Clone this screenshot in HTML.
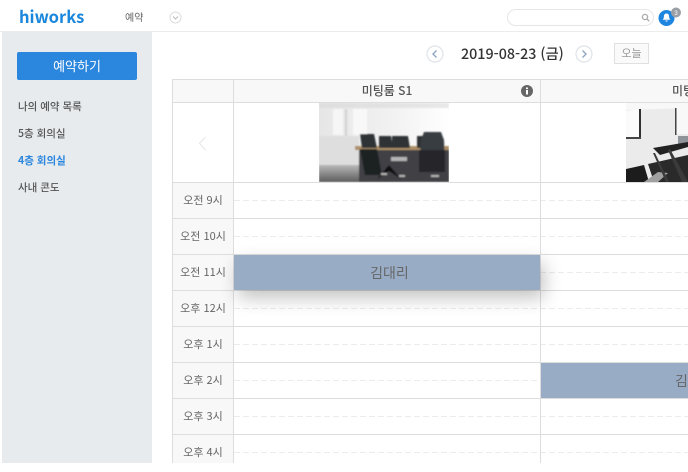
<!DOCTYPE html>
<html lang="ko"><head><meta charset="utf-8"><title>hiworks 예약</title>
<style>
html,body{margin:0;padding:0;background:#fff}
#p{position:relative;width:688px;height:472px;overflow:hidden;background:#fff;font-family:"Noto Sans CJK KR","Liberation Sans",sans-serif;color:#555}
#p div,#p svg{position:absolute}
.h{height:1px;background:#ddd}
.v{width:1px;background:#ddd}
.d{height:1px;background:repeating-linear-gradient(90deg,#ececec 0 6px,transparent 6px 9px)}
.t{left:173px;width:60px;text-align:center;font-size:11px;line-height:35px;height:35px;background:#f8f8f8;color:#666}
.m{left:18px;font-size:10.500px;line-height:14px;font-weight:500;color:#555;white-space:nowrap}
</style></head><body>
<div id="p">
<!-- top bar -->
<div style="left:0;top:31px;width:688px;height:1px;background:#ececec"></div>
<div style="left:19px;top:4px;font-size:16.500px;line-height:24px;font-weight:700;color:#1a86dc">hiworks</div>
<div style="left:125px;top:10px;font-size:10px;line-height:14px;color:#666">예약</div>
<svg style="left:169px;top:11px" width="13" height="13" viewBox="0 0 13 13"><circle cx="6.500" cy="6.500" r="5.500" fill="#fff" stroke="#ddd"/><path d="M4 5.500l2.500 2.500 2.500-2.500" fill="none" stroke="#bbb"/></svg>
<div style="left:507px;top:9px;width:145px;height:15px;border:1px solid #e6e6e6;border-radius:9px;background:#fff"></div>
<svg style="left:641px;top:13px" width="9" height="9" viewBox="0 0 9 9"><circle cx="4" cy="4" r="2.600" fill="none" stroke="#aaa" stroke-width="1.300"/><path d="M6 6l2.200 2.200" stroke="#aaa" stroke-width="1.300"/></svg>
<svg style="left:658px;top:7px" width="24" height="20" viewBox="0 0 24 20"><circle cx="8.500" cy="11" r="8" fill="#1f86e0"/><path d="M8.500 6.500c-2 0-2.600 1.600-2.600 3.200 0 1.600-.9 2.400-1.100 3h7.400c-.2-.6-1.100-1.400-1.100-3 0-1.600-.6-3.200-2.600-3.200zM7.500 13.500h2v1h-2z" fill="#fff"/><circle cx="18" cy="5.500" r="5" fill="#9a9fa6"/><text x="18" y="7.800" font-size="6" fill="#fff" text-anchor="middle" font-family="Liberation Sans">3</text></svg>
<!-- sidebar -->
<div style="left:2px;top:32px;width:150px;height:431px;background:#e7ebee"></div>
<div style="left:17px;top:52px;width:120px;height:28px;background:#2b86dd;border-radius:2px;color:#fff;font-size:13px;line-height:27px;text-align:center">예약하기</div>
<div class="m" style="top:100px">나의 예약 목록</div>
<div class="m" style="top:127px">5층 회의실</div>
<div class="m" style="top:154px;color:#2b86dd;font-weight:700">4층 회의실</div>
<div class="m" style="top:181px">사내 콘도</div>
<!-- date nav -->
<svg style="left:426px;top:45px" width="18" height="18" viewBox="0 0 18 18"><circle cx="9" cy="9" r="8" fill="#fff" stroke="#dfe3e8" stroke-width="1.200"/><path d="M10.500 5.500L7 9l3.500 3.500" fill="none" stroke="#8fa6c4" stroke-width="1.400"/></svg>
<div style="left:461px;top:43px;font-size:14.300px;line-height:21px;font-weight:500;color:#333;white-space:nowrap">2019-08-23 (금)</div>
<svg style="left:575px;top:45px" width="18" height="18" viewBox="0 0 18 18"><circle cx="9" cy="9" r="8" fill="#fff" stroke="#dfe3e8" stroke-width="1.200"/><path d="M7.500 5.500L11 9l-3.500 3.500" fill="none" stroke="#8fa6c4" stroke-width="1.400"/></svg>
<div style="left:614px;top:43px;width:33px;height:19px;border:1px solid #e0e0e0;background:#fafafa;color:#999;font-size:11px;line-height:19px;text-align:center">오늘</div>
<!-- table bg -->
<div style="left:173px;top:80px;width:515px;height:22px;background:#f8f8f8"></div>
<div class="t" style="top:183px">오전 9시</div>
<div class="t" style="top:219px">오전 10시</div>
<div class="t" style="top:255px">오전 11시</div>
<div class="t" style="top:291px">오후 12시</div>
<div class="t" style="top:327px">오후 1시</div>
<div class="t" style="top:363px">오후 2시</div>
<div class="t" style="top:399px">오후 3시</div>
<div class="t" style="top:435px;height:28px">오후 4시</div>
<!-- dashed -->
<div class="d" style="left:234px;top:200px;width:454px"></div>
<div class="d" style="left:234px;top:236px;width:454px"></div>
<div class="d" style="left:234px;top:272px;width:454px"></div>
<div class="d" style="left:234px;top:308px;width:454px"></div>
<div class="d" style="left:234px;top:344px;width:454px"></div>
<div class="d" style="left:234px;top:380px;width:454px"></div>
<div class="d" style="left:234px;top:416px;width:454px"></div>
<div class="d" style="left:234px;top:452px;width:454px"></div>
<!-- grid -->
<div class="h" style="left:172px;top:79px;width:516px"></div>
<div class="h" style="left:172px;top:102px;width:516px"></div>
<div class="h" style="left:172px;top:182px;width:516px"></div>
<div class="h" style="left:172px;top:218px;width:516px"></div>
<div class="h" style="left:172px;top:254px;width:516px"></div>
<div class="h" style="left:172px;top:290px;width:516px"></div>
<div class="h" style="left:172px;top:326px;width:516px"></div>
<div class="h" style="left:172px;top:362px;width:516px"></div>
<div class="h" style="left:172px;top:398px;width:516px"></div>
<div class="h" style="left:172px;top:434px;width:516px"></div>
<div class="v" style="left:172px;top:79px;height:384px"></div>
<div class="v" style="left:233px;top:79px;height:384px"></div>
<div class="v" style="left:540px;top:79px;height:384px"></div>
<!-- header -->
<div style="left:234px;top:83px;width:306px;text-align:center;font-size:12px;line-height:16px;font-weight:500;color:#555">미팅룸 S1</div>
<div style="left:672px;top:83px;font-size:12px;line-height:16px;font-weight:500;color:#555;white-space:nowrap">미팅룸 S2</div>
<svg style="left:521px;top:85px" width="12" height="12" viewBox="0 0 12 12"><circle cx="6" cy="6" r="6" fill="#666"/><rect x="5" y="5" width="2" height="4.500" fill="#fff"/><rect x="5" y="2.500" width="2" height="1.600" fill="#fff"/></svg>
<svg style="left:198px;top:136px" width="9" height="15" viewBox="0 0 9 15"><path d="M7.500 1L1.500 7.500l6 6.500" fill="none" stroke="#e6e6e6"/></svg>
<!-- image 1 -->
<svg style="left:319px;top:103px" width="130" height="79" viewBox="0 0 130 79">
<defs><linearGradient id="g" x1="0" x2="1" y1="0" y2="0"><stop offset="0" stop-color="#e6e6e6"/><stop offset=".55" stop-color="#f1f1f1"/><stop offset="1" stop-color="#fff"/></linearGradient><linearGradient id="f" x1="0" x2="0" y1="0" y2="1"><stop offset="0" stop-color="#b8b8b8"/><stop offset="1" stop-color="#5c5c5c"/></linearGradient><filter id="b"><feGaussianBlur stdDeviation=".8"/></filter></defs>
<rect width="130" height="79" fill="url(#g)"/>
<g filter="url(#b)">
<rect x="0" y="0" width="130" height="5" fill="#d8d8d8" opacity=".6"/>
<rect x="14" y="6" width="10" height="26" fill="#f6f6f6"/><rect x="26" y="6" width="2" height="30" fill="#d2d2d2"/><rect x="34" y="6" width="14" height="26" fill="#f8f8f8"/>
<rect x="0" y="33" width="40" height="29" fill="#dedede"/>
<rect x="0" y="62" width="48" height="17" fill="url(#f)"/>
<rect x="40" y="47" width="90" height="32" fill="#3f4144"/>
<rect x="36" y="43" width="94" height="4" fill="#ad9068"/>
<path d="M41 31h14l3 14H43zM60 33h12l2 12H60zM73 33h16l2 12H73zM98 33h6v12h-6z" fill="#2e3135"/>
<path d="M41 46h17l5 26H46z" fill="#1f2124"/>
<path d="M105 29h17l3 8 1 27H100l2-27z" fill="#383d43"/>
<path d="M100 47h26v22H100z" fill="#25282c"/>
<path d="M58 76l12-14 12 14-12-8z" fill="#111"/>
<path d="M62 70h6v2h-6zM80 72h6v2h-6zM112 72h8v2h-8zM72 54h16v4H72z" fill="#b4b4b4"/>
</g></svg>
<!-- image 2 -->
<svg style="left:626px;top:103px" width="62" height="79" viewBox="0 0 62 79">
<defs><filter id="c"><feGaussianBlur stdDeviation=".35"/></filter></defs>
<rect width="62" height="79" fill="#ebebeb"/>
<g filter="url(#c)">
<path d="M0 0h62v5L0 7z" fill="#f8f8f8"/><path d="M0 8l13-2v29H0z" fill="#fbfbfb"/><rect x="13" y="6" width="2" height="30" fill="#333"/><rect x="0" y="34" width="15" height="2" fill="#444"/>
<rect x="50" y="5" width="12" height="26" fill="#f8f8f8"/><rect x="49" y="5" width="1.500" height="27" fill="#444"/>
<rect x="52" y="33" width="10" height="10" fill="#8e949a"/>
<path d="M0 66l18-4 5 17H0z" fill="#1e1e1e"/><path d="M22 61l40-9v27H28z" fill="#2a2a2a"/><path d="M18 79l14-10 10 1-10 9z" fill="#a0a0a0"/>
<path d="M27 45l35-6v5l-28 8z" fill="#222"/><path d="M29 50l14 29h-3L27 50zM44 46l18 33h-6L42 47z" fill="#3a3a3a"/>
</g></svg>
<!-- events -->
<div style="left:234px;top:255px;width:301px;padding-left:5px;height:35px;background:#99acc6;box-shadow:4px 8px 18px rgba(0,0,0,.24);color:#666;font-size:14px;line-height:36px;text-align:center">김대리</div>
<div style="left:541px;top:363px;width:147px;height:35px;background:#99acc6;overflow:hidden;color:#666;font-size:14px;line-height:36px;white-space:nowrap"><span style="margin-left:134px">김대리</span></div>
</div>
</body></html>
